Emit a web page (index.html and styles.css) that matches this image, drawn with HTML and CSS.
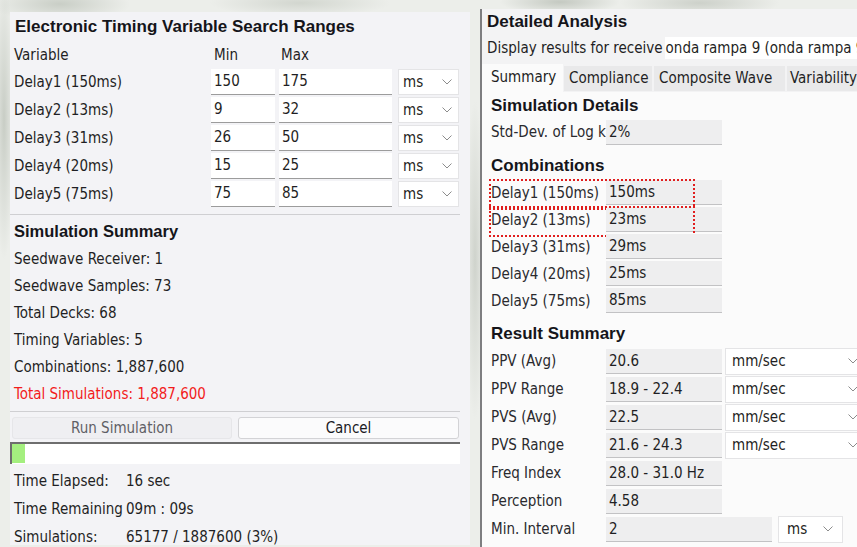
FILE: index.html
```html
<!DOCTYPE html>
<html lang="en">
<head>
<meta charset="utf-8">
<title>Electronic Timing Search</title>
<link rel="stylesheet" href="styles.css">
</head>
<body>
<div class="desk">

  <section class="panel search">
    <h1 class="title">Electronic Timing Variable Search Ranges</h1>

    <div class="ranges">
      <div class="rng-row rng-head">
        <span class="c-var">Variable</span>
        <span class="c-min">Min</span>
        <span class="c-max">Max</span>
      </div>
      <div class="rng-row">
        <span class="c-var">Delay1 (150ms)</span>
        <span class="field f-min">150</span>
        <span class="field f-max">175</span>
        <span class="combo f-unit">ms<svg class="chev" viewBox="0 0 10 6"><polyline points="0.5,0.5 5,5 9.5,0.5"/></svg></span>
      </div>
      <div class="rng-row">
        <span class="c-var">Delay2 (13ms)</span>
        <span class="field f-min">9</span>
        <span class="field f-max">32</span>
        <span class="combo f-unit">ms<svg class="chev" viewBox="0 0 10 6"><polyline points="0.5,0.5 5,5 9.5,0.5"/></svg></span>
      </div>
      <div class="rng-row">
        <span class="c-var">Delay3 (31ms)</span>
        <span class="field f-min">26</span>
        <span class="field f-max">50</span>
        <span class="combo f-unit">ms<svg class="chev" viewBox="0 0 10 6"><polyline points="0.5,0.5 5,5 9.5,0.5"/></svg></span>
      </div>
      <div class="rng-row">
        <span class="c-var">Delay4 (20ms)</span>
        <span class="field f-min">15</span>
        <span class="field f-max">25</span>
        <span class="combo f-unit">ms<svg class="chev" viewBox="0 0 10 6"><polyline points="0.5,0.5 5,5 9.5,0.5"/></svg></span>
      </div>
      <div class="rng-row">
        <span class="c-var">Delay5 (75ms)</span>
        <span class="field f-min">75</span>
        <span class="field f-max">85</span>
        <span class="combo f-unit">ms<svg class="chev" viewBox="0 0 10 6"><polyline points="0.5,0.5 5,5 9.5,0.5"/></svg></span>
      </div>
    </div>

    <div class="rule"></div>

    <h2 class="sec sec-left">Simulation Summary</h2>
    <ul class="stats">
      <li>Seedwave Receiver: 1</li>
      <li>Seedwave Samples: 73</li>
      <li>Total Decks: 68</li>
      <li>Timing Variables: 5</li>
      <li>Combinations: 1,887,600</li>
      <li class="alert">Total Simulations: 1,887,600</li>
    </ul>

    <div class="rule rule-low"></div>

    <div class="actions">
      <button class="btn btn-off" type="button">Run Simulation</button>
      <button class="btn" type="button">Cancel</button>
    </div>

    <div class="progress"><div class="progress-fill" style="width:13px"></div></div>

    <dl class="timing">
      <div class="t-row"><dt>Time Elapsed:</dt><dd>16 sec</dd></div>
      <div class="t-row"><dt>Time Remaining</dt><dd>09m : 09s</dd></div>
      <div class="t-row"><dt>Simulations:</dt><dd>65177 / 1887600 (3%)</dd></div>
    </dl>
  </section>

  <section class="panel analysis">
    <h1 class="title a-title">Detailed Analysis</h1>

    <div class="receiver">
      <span class="rcv-label">Display results for receive</span>
      <span class="rcv-input">onda rampa 9 (onda rampa 9)</span>
    </div>

    <div class="tabs">
      <span class="tab tab-on">Summary</span>
      <span class="tab tab-2">Compliance</span>
      <span class="tab tab-3">Composite Wave</span>
      <span class="tab tab-4">Variability</span>
    </div>

    <div class="sheet">
      <h2 class="sec">Simulation Details</h2>
      <div class="kv kv-std">
        <span class="k">Std-Dev. of Log k</span>
        <span class="ro">2%</span>
      </div>

      <h2 class="sec sec-gap">Combinations</h2>
      <div class="kv kv-c marked"><span class="k">Delay1 (150ms)</span><span class="ro">150ms</span></div>
      <div class="kv kv-c marked"><span class="k">Delay2 (13ms)</span><span class="ro">23ms</span></div>
      <div class="kv kv-c"><span class="k">Delay3 (31ms)</span><span class="ro">29ms</span></div>
      <div class="kv kv-c"><span class="k">Delay4 (20ms)</span><span class="ro">25ms</span></div>
      <div class="kv kv-c"><span class="k">Delay5 (75ms)</span><span class="ro">85ms</span></div>

      <h2 class="sec sec-gap2">Result Summary</h2>
      <div class="kv kv-r"><span class="k">PPV (Avg)</span><span class="ro">20.6</span>
        <span class="combo unit-wide">mm/sec<svg class="chev" viewBox="0 0 10 6"><polyline points="0.5,0.5 5,5 9.5,0.5"/></svg></span></div>
      <div class="kv kv-r"><span class="k">PPV Range</span><span class="ro">18.9 - 22.4</span>
        <span class="combo unit-wide">mm/sec<svg class="chev" viewBox="0 0 10 6"><polyline points="0.5,0.5 5,5 9.5,0.5"/></svg></span></div>
      <div class="kv kv-r"><span class="k">PVS (Avg)</span><span class="ro">22.5</span>
        <span class="combo unit-wide">mm/sec<svg class="chev" viewBox="0 0 10 6"><polyline points="0.5,0.5 5,5 9.5,0.5"/></svg></span></div>
      <div class="kv kv-r"><span class="k">PVS Range</span><span class="ro">21.6 - 24.3</span>
        <span class="combo unit-wide">mm/sec<svg class="chev" viewBox="0 0 10 6"><polyline points="0.5,0.5 5,5 9.5,0.5"/></svg></span></div>
      <div class="kv kv-r"><span class="k">Freq Index</span><span class="ro">28.0 - 31.0 Hz</span></div>
      <div class="kv kv-r"><span class="k">Perception</span><span class="ro">4.58</span></div>
      <div class="kv kv-r"><span class="k">Min. Interval</span><span class="ro ro-long">2</span>
        <span class="combo unit-ms">ms<svg class="chev" viewBox="0 0 10 6"><polyline points="0.5,0.5 5,5 9.5,0.5"/></svg></span></div>
    </div>
  </section>

</div>
</body>
</html>
```

FILE: styles.css
```css
* { box-sizing: border-box; }

html, body {
  margin: 0;
  width: 857px;
  height: 547px;
  overflow: hidden;
}

body {
  font-family: "DejaVu Sans Condensed", "DejaVu Sans", sans-serif;
  font-stretch: semi-condensed;
  font-size: 15px;
  color: #1f1f24;
  background-color: #eceeea;
  background-image:
    radial-gradient(ellipse 70px 18px at 60px 4px, #c9cec6 0%, rgba(201,206,198,0) 100%),
    radial-gradient(ellipse 90px 14px at 300px 3px, #d2d6cf 0%, rgba(210,214,207,0) 100%),
    radial-gradient(ellipse 60px 12px at 560px 2px, #c4c9c1 0%, rgba(196,201,193,0) 100%),
    radial-gradient(ellipse 80px 14px at 700px 3px, #cdd1ca 0%, rgba(205,209,202,0) 100%),
    radial-gradient(ellipse 10px 140px at 4px 120px, #c8cdc5 0%, rgba(200,205,197,0) 100%),
    radial-gradient(ellipse 10px 160px at 475px 260px, #cfd3cc 0%, rgba(207,211,204,0) 100%);
}

.desk {
  display: flex;
  align-items: flex-start;
  height: 547px;
}

.panel { overflow: hidden; flex: none; }

/* ---------- search ranges panel ---------- */
.search {
  margin: 12px 0 0 10px;
  width: 460px;
  height: 533px;
  padding-left: 4px;
  background: #f3f3f6;
}

.title {
  margin: 0;
  padding: 5px 0 3px 1px;
  height: 28px;
  font: bold 17px/20px "Liberation Sans", Arial, sans-serif;
  color: #15151a;
  white-space: nowrap;
}

.rng-row {
  display: flex;
  align-items: center;
  height: 28px;
}
.rng-row > * { flex: none; }
.rng-head { padding-top: 1px; }

.c-var { width: 197px; white-space: nowrap; }
.c-min, .c-max { padding-left: 3px; }
.c-min { width: 68px; }
.c-max { width: 113px; padding-left: 2px; }

.field {
  height: 26px;
  line-height: 25px;
  padding-left: 3px;
  background: #fff;
  border-bottom: 1px solid #9c9c9c;
}
.f-min { width: 64px; margin-right: 4px; }
.f-max { width: 113px; margin-right: 6px; }

.combo {
  display: flex;
  align-items: center;
  justify-content: space-between;
  height: 26px;
  background: #fff;
  border: 1px solid #e4e4e6;
  white-space: nowrap;
  flex: none;
}
.f-unit { width: 61px; padding: 0 6px 0 4px; }

.chev {
  width: 10px;
  height: 6px;
  flex: none;
}
.chev polyline {
  fill: none;
  stroke: #8c8c8c;
  stroke-width: 1;
}

.rule {
  margin: 6px 0 0 -4px;
  width: 450px;
  height: 1px;
  background: #cfcfd2;
}
.rule-low { margin-top: 4px; }

.sec {
  margin: 0;
  height: 27px;
  font: bold 17px/27px "Liberation Sans", Arial, sans-serif;
  color: #15151a;
  white-space: nowrap;
}
.sec-left { padding-top: 3px; height: 30px; line-height: 27px; font-size: 16.5px; }

.stats {
  list-style: none;
  margin: 0;
  padding: 0;
}
.stats li {
  height: 27px;
  line-height: 28px;
  white-space: nowrap;
}
.stats .alert { color: #f21c1c; }

.actions {
  display: flex;
  gap: 6px;
  margin: 5px 0 0 -2px;
}
.btn {
  height: 22px;
  padding: 0;
  font: inherit;
  border-radius: 3px;
  cursor: default;
}
.btn-off {
  width: 220px;
  color: #5f5f66;
  background: #efeff2;
  border: 1px solid #e6e6e9;
}
.btn:not(.btn-off) {
  width: 221px;
  color: #1a1a1f;
  background: #fbfbfc;
  border: 1px solid #d3d3d6;
}

.progress {
  margin: 3px 0 0 -4px;
  width: 450px;
  height: 22px;
  background: #fff;
  border-top: 2px solid #6e6e6e;
  border-left: 2px solid #6e6e6e;
  padding-bottom: 1px;
}
.progress-fill {
  height: 100%;
  background: #a4ef7f;
}

.timing { margin: 3px 0 0; }
.t-row {
  display: flex;
  height: 28px;
  line-height: 29px;
  white-space: nowrap;
}
.t-row dt { width: 112px; flex: none; }
.t-row dd { margin: 0; }

/* ---------- detailed analysis panel ---------- */
.analysis {
  margin: 9px 0 0 10px;
  width: 377px;
  height: 538px;
  border-left: 2px solid #7e7e80;
  background: #f3f3f4;
  display: flex;
  flex-direction: column;
}

.a-title {
  padding: 0 0 0 5px;
  height: 26px;
  line-height: 26px;
}

.receiver {
  display: flex;
  height: 22px;
  margin: 2px 0 0 5px;
  white-space: nowrap;
}
.rcv-label {
  flex: none;
  padding-right: 2px;
  line-height: 23px;
}
.rcv-input {
  flex: 1;
  overflow: hidden;
  padding-left: 1px;
  line-height: 23px;
  background: #fff;
}

.tabs {
  display: flex;
  align-items: flex-end;
  gap: 1px;
  margin: 5px 0 0 0;
  height: 28px;
  white-space: nowrap;
}
.tab {
  flex: none;
  height: 25px;
  line-height: 25px;
  padding: 0 0 0 6px;
  background: #e9e9ea;
  margin-bottom: 1px;
}
.tab-on {
  width: 81px;
  height: 28px;
  line-height: 27px;
  padding-left: 9px;
  background: #fbfbfb;
  margin-bottom: 0;
}
.tab-2 { width: 88px; padding-left: 5px; }
.tab-3 { width: 131px; margin-left: 1px; padding-left: 5px; }
.tab-4 { width: 80px; margin-left: 1px; padding-left: 3px; }

.sheet {
  flex: 1;
  background: #fbfbfb;
  padding-left: 9px;
}

.sheet .sec { height: 27px; }
.sec-gap { margin-top: 7px; }
.sec-gap2 { margin-top: 6px; }

.kv {
  position: relative;
  display: flex;
  align-items: center;
  white-space: nowrap;
}
.kv > * { flex: none; }
.kv-std { height: 26px; }
.kv-c { height: 27px; }
.kv-r { height: 28px; }

.k {
  width: 115px;
  overflow: hidden;
  color: #2a2a2e;
}

.ro {
  width: 116px;
  height: 25px;
  line-height: 24px;
  padding-left: 3px;
  background: #eeeeef;
  border-bottom: 1px solid #c2c2c4;
}
.ro-long { width: 166px; }

.unit-wide {
  width: 140px;
  margin-left: 3px;
  height: 27px;
  padding: 0 6px 0 6px;
}
.unit-ms {
  width: 65px;
  margin-left: 6px;
  height: 27px;
  padding: 0 9px 0 8px;
}

/* highlighted combination rows */
.marked::after {
  content: "";
  position: absolute;
  left: -2px;
  top: 0;
  width: 202px;
  height: 27px;
  border: 2px dotted #e01e1e;
  pointer-events: none;
}
```
